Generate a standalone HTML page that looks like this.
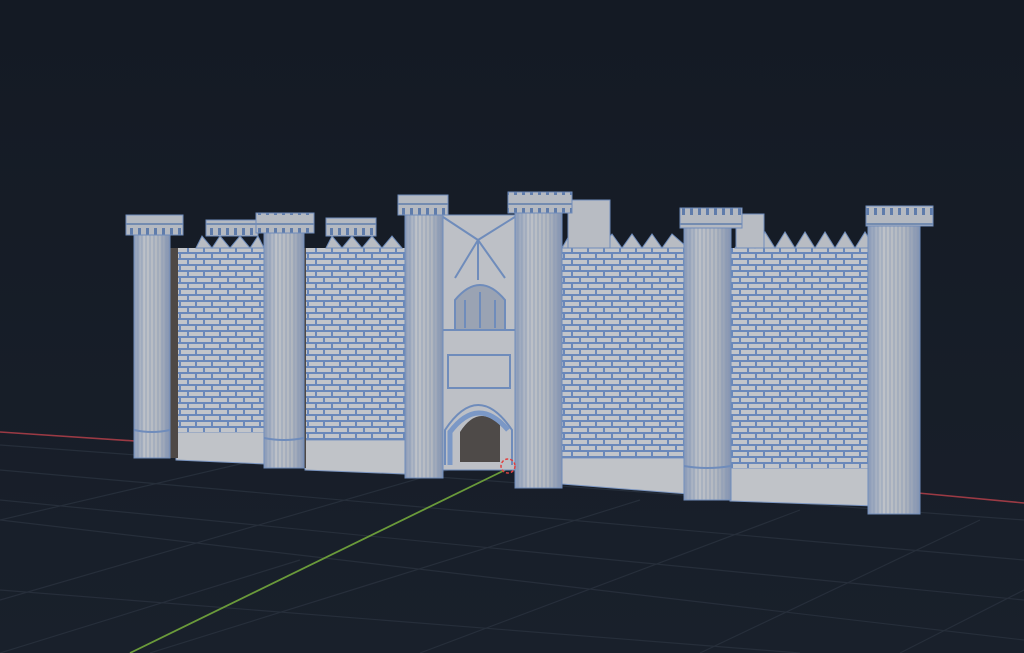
<!DOCTYPE html>
<html><head><style>html,body{margin:0;padding:0;background:#151b25;overflow:hidden}svg{display:block}</style></head><body>
<svg width="1024" height="653" viewBox="0 0 1024 653" xmlns="http://www.w3.org/2000/svg">
<defs>
<linearGradient id="bg" x1="0" y1="0" x2="0" y2="1"><stop offset="0" stop-color="#141a24"/><stop offset="1" stop-color="#19202b"/></linearGradient>
<pattern id="brick" width="16" height="12" patternUnits="userSpaceOnUse">
<rect width="16" height="12" fill="#c2c5ca"/>
<path d="M0 1H16M0 7H16M4 0V6M12 6V12" stroke="#6a88ba" stroke-width="2"/>
</pattern>
<pattern id="col" width="4" height="10" patternUnits="userSpaceOnUse">
<path d="M2 0V10" stroke="#8597b5" stroke-width="0.7"/>
</pattern>
<pattern id="cren" width="8" height="20" patternUnits="userSpaceOnUse">
<rect width="8" height="20" fill="#b4b9c1"/><rect x="2" y="8" width="3" height="7" fill="#5f7cab"/><path d="M0 4H8" stroke="#5f7cab" stroke-width="1.5"/>
</pattern>
<linearGradient id="cg" x1="0" y1="0" x2="1" y2="0"><stop offset="0" stop-color="#8d9dba"/><stop offset="0.3" stop-color="#bec2c8"/><stop offset="0.7" stop-color="#b2b7bf"/><stop offset="1" stop-color="#8292b0"/></linearGradient>
</defs>
<rect width="1024" height="653" fill="url(#bg)"/>
<g stroke="#262e3a" stroke-width="1.2" fill="none">
<path d="M0 470L1024 560M0 520L1024 640M0 590L800 653M0 445L1024 520M0 500L1024 600"/>
<path d="M0 600L500 455M0 653L300 560M150 653L640 500M420 653L800 510M700 653L980 520M900 653L1024 590M0 520L300 450"/>
</g>
<path d="M0 432L135 441M918 493L1024 503" stroke="#9b3a44" stroke-width="1.6"/>
<path d="M130 653L505 470" stroke="#6a9a3a" stroke-width="1.8"/>
<!-- bases -->
<path d="M176 432L266 432L266 464L176 460Z" fill="#c0c3c8" stroke="#7b95c0"/>
<path d="M305 440L405 440L405 474L305 470Z" fill="#c0c3c8" stroke="#7b95c0"/>
<path d="M562 458L688 458L688 494L562 484Z" fill="#c0c3c8" stroke="#7b95c0"/>
<path d="M730 468L875 468L875 506L730 501Z" fill="#c0c3c8" stroke="#7b95c0"/>
<!-- walls -->
<rect x="176" y="248" width="90" height="184" fill="url(#brick)"/>
<rect x="305" y="248" width="100" height="192" fill="url(#brick)"/>
<rect x="562" y="248" width="126" height="210" fill="url(#brick)"/>
<rect x="730" y="248" width="145" height="220" fill="url(#brick)"/>
<rect x="166" y="248" width="12" height="210" fill="#4e4845"/>
<rect x="296" y="248" width="10" height="220" fill="#4e4845"/>
<!-- battlements -->
<g fill="#b8bcc3" stroke="#6f8cbb" stroke-width="1">
<path d="M196 248L202 236L212 248L220 236L230 248L240 236L250 248L258 236L264 248Z"/>
<path d="M326 248L332 236L342 248L352 236L362 248L372 236L382 248L392 236L402 248Z"/>
<path d="M562 248L570 234L580 248L590 234L600 248L612 234L622 248L632 234L642 248L652 234L662 248L672 234L688 248Z"/>
<path d="M735 248L745 232L755 248L765 232L775 248L785 232L795 248L805 232L815 248L825 232L835 248L845 232L855 248L865 232L875 248Z"/>
<rect x="206" y="220" width="52" height="16" fill="url(#cren)"/><rect x="326" y="218" width="50" height="18" fill="url(#cren)"/>
<rect x="568" y="200" width="42" height="48"/><rect x="736" y="214" width="28" height="34"/>
</g>
<!-- gate -->
<rect x="440" y="215" width="78" height="255" fill="#bdc0c6" stroke="#6f8cbb"/>
<g stroke="#6f8cbb" stroke-width="2" fill="none">
<path d="M440 215L478 240L518 215M478 240V280M478 240L455 278M478 240L505 278"/>
<path d="M455 330V300Q480 270 505 300V330Z" fill="#9aa3b3"/>
<path d="M465 300V328M480 292V328M495 300V328"/>
<path d="M440 330H518M448 355H510V388H448Z"/>
<path d="M445 465V430Q478 380 512 430V465"/>
</g>
<path d="M460 462V432Q478 404 500 425V462Z" fill="#4e4a48"/>
<path d="M450 465V432Q478 395 508 430" stroke="#7b98c6" stroke-width="5" fill="none"/>
<!-- towers -->
<g stroke="#6f8cbb" stroke-width="1">
<g><rect x="134" y="232" width="36" height="226" fill="url(#cg)"/><rect x="134" y="232" width="36" height="226" fill="url(#col)"/><rect x="126" y="215" width="57" height="20" fill="url(#cren)"/></g>
<g><rect x="264" y="230" width="40" height="238" fill="url(#cg)"/><rect x="264" y="230" width="40" height="238" fill="url(#col)"/><rect x="256" y="213" width="58" height="20" fill="url(#cren)"/></g>
<g><rect x="405" y="212" width="38" height="266" fill="url(#cg)"/><rect x="405" y="212" width="38" height="266" fill="url(#col)"/><rect x="398" y="195" width="50" height="20" fill="url(#cren)"/></g>
<g><rect x="515" y="210" width="47" height="278" fill="url(#cg)"/><rect x="515" y="210" width="47" height="278" fill="url(#col)"/><rect x="508" y="192" width="64" height="21" fill="url(#cren)"/></g>
<g><rect x="684" y="226" width="47" height="274" fill="url(#cg)"/><rect x="684" y="226" width="47" height="274" fill="url(#col)"/><rect x="680" y="208" width="62" height="20" fill="url(#cren)"/></g>
<g><rect x="868" y="224" width="52" height="290" fill="url(#cg)"/><rect x="868" y="224" width="52" height="290" fill="url(#col)"/><rect x="866" y="206" width="67" height="20" fill="url(#cren)"/></g>
</g>
<path d="M134 430Q152 434 170 430M264 438Q284 442 304 438M684 466Q707 470 731 466" stroke="#6f8cbb" stroke-width="2" fill="none"/>
<circle cx="508" cy="466" r="7" fill="none" stroke="#e04040" stroke-width="1.5" stroke-dasharray="3 2"/>
</svg>
</body></html>
